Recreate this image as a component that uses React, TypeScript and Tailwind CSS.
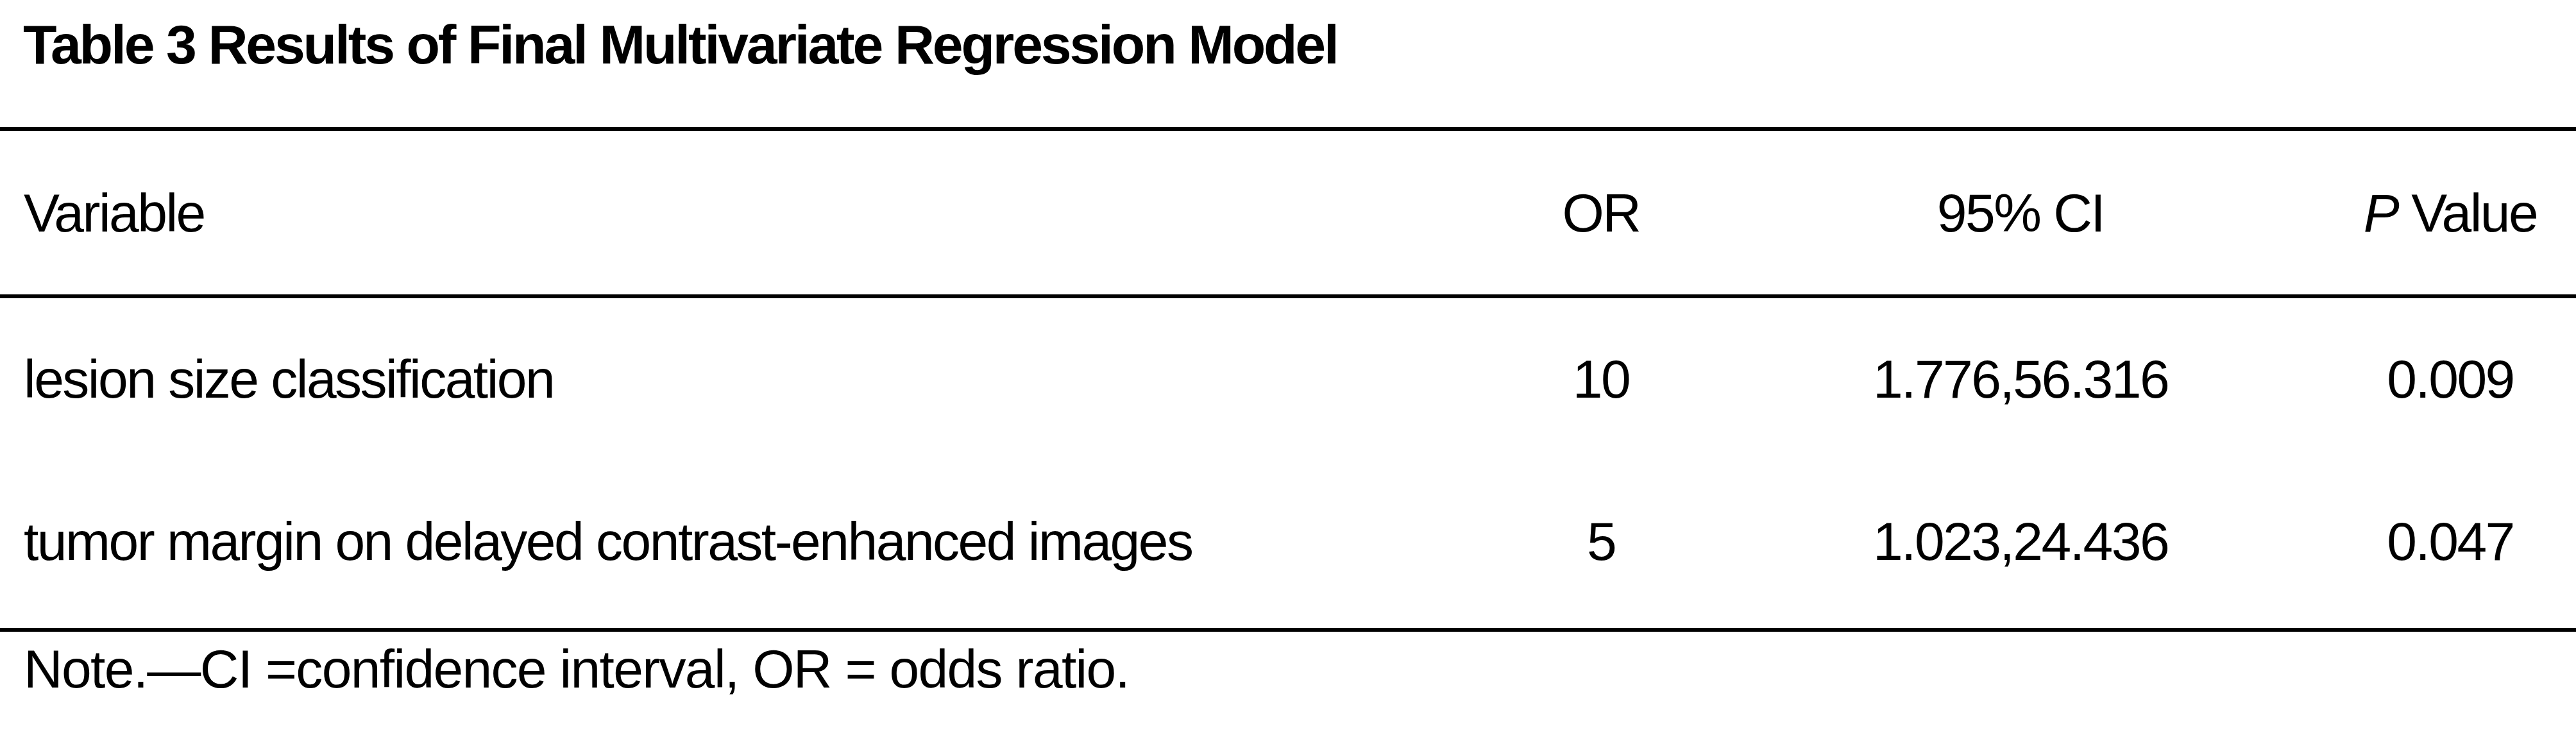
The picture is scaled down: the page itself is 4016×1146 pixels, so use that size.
const rows = [
  { variable: "lesion size classification", or: "10", ci: "1.776,56.316", p: "0.009" },
  { variable: "tumor margin on delayed contrast-enhanced images", or: "5", ci: "1.023,24.436", p: "0.047" },
]

function Rule() {
  return <div className="h-[6px] bg-black" />
}

function Row({ children }: { children: React.ReactNode }) {
  return (
    <div className="grid grid-cols-[2279px_360px_948px_392px] items-center pl-[37px]">
      {children}
    </div>
  )
}

export default function App() {
  return (
    <div className="h-[1146px] w-[4016px] overflow-hidden bg-white font-['Liberation_Sans',Arial,sans-serif] text-black">
      <h1 className="h-[198px] pl-[36px] pt-[26px] text-[86px] font-bold leading-none tracking-[-0.037em]">
        Table 3 Results of Final Multivariate Regression Model
      </h1>
      <Rule />

      <div className="flex h-[255px] flex-col justify-center text-[84px] leading-none tracking-[-0.03em]">
        <Row>
          <span>Variable</span>
          <span className="text-center">OR</span>
          <span className="text-center">95% CI</span>
          <span className="text-center">
            <i>P</i> Value
          </span>
        </Row>
      </div>
      <Rule />

      <div className="flex flex-col gap-[169px] pb-[93px] pt-[84px] text-[84px] leading-none tracking-[-0.03em]">
        {rows.map((row) => (
          <Row key={row.variable}>
            <span>{row.variable}</span>
            <span className="text-center">{row.or}</span>
            <span className="text-center">{row.ci}</span>
            <span className="text-center">{row.p}</span>
          </Row>
        ))}
      </div>
      <Rule />

      <p className="pl-[37px] pt-[16px] text-[84px] leading-none tracking-[-0.02em]">
        Note.—CI =confidence interval, OR = odds ratio.
      </p>
    </div>
  )
}
